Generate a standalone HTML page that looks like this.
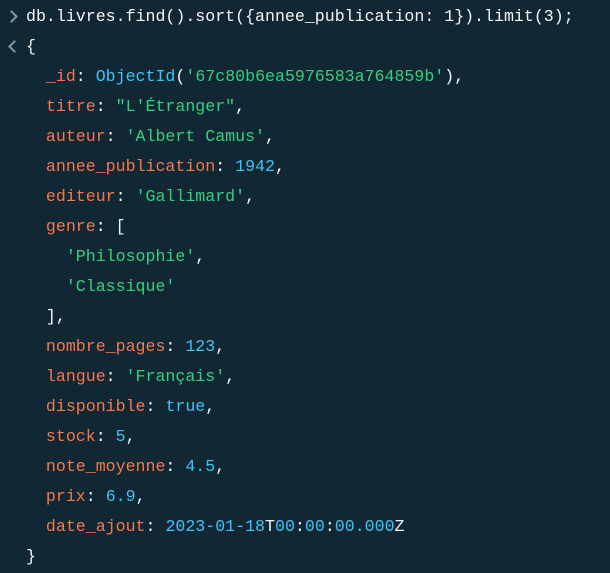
<!DOCTYPE html>
<html><head><meta charset="utf-8"><style>
html,body{margin:0;padding:0;background:#112733;width:610px;height:573px;overflow:hidden}
pre{margin:0;position:absolute;left:26px;top:2px;font-family:"Liberation Mono",monospace;font-size:16.6px;line-height:30px;color:#f5f5f5;white-space:pre}
.k{color:#f5784e}.s{color:#35d07f}.n{color:#3ec4f6}.b{color:#3ec4f6}
.p{position:absolute;left:7px;width:7px;height:7px;border-left:2px solid #8a959d;border-bottom:2px solid #8a959d}
</style></head><body>
<div class="p" style="top:12px;transform:rotate(-135deg)"></div>
<div class="p" style="top:42px;left:10px;transform:rotate(45deg)"></div>
<pre>db.livres.find().sort({annee_publication: 1}).limit(3);
{
  <span class="k">_id</span>: <span class="b">ObjectId</span>(<span class="s">'67c80b6ea5976583a764859b'</span>),
  <span class="k">titre</span>: <span class="s">"L'Étranger"</span>,
  <span class="k">auteur</span>: <span class="s">'Albert Camus'</span>,
  <span class="k">annee_publication</span>: <span class="n">1942</span>,
  <span class="k">editeur</span>: <span class="s">'Gallimard'</span>,
  <span class="k">genre</span>: [
    <span class="s">'Philosophie'</span>,
    <span class="s">'Classique'</span>
  ],
  <span class="k">nombre_pages</span>: <span class="n">123</span>,
  <span class="k">langue</span>: <span class="s">'Français'</span>,
  <span class="k">disponible</span>: <span class="n">true</span>,
  <span class="k">stock</span>: <span class="n">5</span>,
  <span class="k">note_moyenne</span>: <span class="n">4.5</span>,
  <span class="k">prix</span>: <span class="n">6.9</span>,
  <span class="k">date_ajout</span>: <span class="n">2023-01-18</span>T<span class="n">00</span>:<span class="n">00</span>:<span class="n">00.000</span>Z
}</pre>
</body></html>
